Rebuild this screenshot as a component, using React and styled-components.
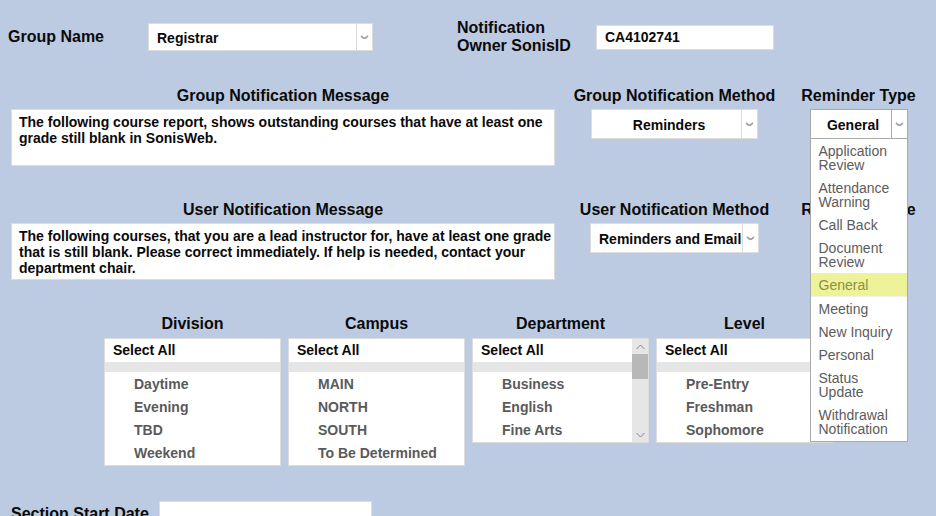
import React from "react";
import styled, { createGlobalStyle, css } from "styled-components";

const GlobalStyle = createGlobalStyle`
  *, *::before, *::after { box-sizing: border-box; }
  body {
    margin: 0;
    background: #bccae2;
    color: #0a0a0a;
    font-family: "Liberation Sans", Arial, sans-serif;
  }
`;

const Form = styled.form`
  height: 100vh;
  overflow: hidden;
  padding-top: 19px;
`;

const IdentityRow = styled.div`
  display: grid;
  grid-template-columns: 140px 225fr 84fr 139px 178fr 154fr;
  align-items: center;
  padding: 0 8px;
  margin-bottom: 32px;

  & > :nth-child(3) {
    grid-column: 4;
  }
`;

const MessageRow = styled.div`
  display: grid;
  grid-template-columns: 544fr 239fr 129fr;
  padding: 0 13px 0 11px;
  margin-bottom: 35px;
`;

const FilterRow = styled.div`
  display: grid;
  grid-template-columns: repeat(4, minmax(0, 1fr));
  align-items: start;
  gap: 7px;
  padding: 0 11% 0 104px;
  margin-bottom: 35px;
`;

const DateRow = styled.div`
  display: flex;
  align-items: center;
  padding-left: 11px;
`;

const Field = styled.div`
  display: flex;
  flex-direction: column;
  align-items: ${(p) => (p.$stretch ? "stretch" : "center")};
  gap: 4px;
  min-width: 0;
`;

const FilterSection = styled.section`
  display: flex;
  flex-direction: column;
  gap: 5px;
  min-width: 0;
`;

const Label = styled.label`
  font-size: 16px;
  font-weight: 700;
  line-height: 18px;
  text-align: ${(p) => (p.$center ? "center" : "left")};
  white-space: nowrap;
`;

const DateLabel = styled(Label)`
  width: 148px;
`;

const Heading = styled.h2`
  margin: 0;
  font-size: 16px;
  line-height: 18px;
  text-align: center;
`;

const boxed = css`
  border: 1px solid #dcdcdc;
  border-radius: 0;
  background: #fff;
  color: #0a0a0a;
  font: 700 14px/16px "Liberation Sans", Arial, sans-serif;
  outline: none;
`;

const TextInput = styled.input`
  ${boxed}
  width: ${(p) => p.$width || "100%"};
  height: 25px;
  padding: 0 8px;
`;

const Message = styled.textarea`
  ${boxed}
  display: block;
  width: 100%;
  height: 57px;
  padding: 4px 0 4px 7px;
  resize: none;
  overflow: hidden;
`;

const SelectFrame = styled.div`
  position: relative;
  display: grid;
  grid-template-columns: minmax(0, 1fr) 17px;
  width: ${(p) => p.$width || "100%"};
  height: ${(p) => p.$height || "30px"};
  --edge: ${(p) => (p.$open ? "#a9a9a9" : "#dcdcdc")};
`;

const NativeSelect = styled.select`
  ${boxed}
  grid-area: 1 / 1 / 2 / 3;
  appearance: none;
  width: 100%;
  height: 100%;
  padding: ${(p) => (p.$center ? "2px 17px 0 6px" : "2px 17px 0 8px")};
  border-color: var(--edge);
  text-align-last: ${(p) => (p.$center ? "center" : "left")};
`;

const Arrow = styled.span`
  grid-area: 1 / 2;
  z-index: 1;
  display: flex;
  align-items: center;
  justify-content: center;
  border: 1px solid var(--edge);
  pointer-events: none;
`;

const Menu = styled.ul`
  position: absolute;
  z-index: 5;
  top: 100%;
  left: 0;
  right: 0;
  margin: 0;
  padding: 0 0 1px;
  list-style: none;
  background: #fff;
  border: 1px solid #a9a9a9;
  border-top: 0;
`;

const MenuItem = styled.li`
  padding: 5px 8px 4px;
  font-size: 14px;
  line-height: 14px;
  color: ${(p) => (p.$selected ? "#8b9040" : "#5c5c5c")};
  background: ${(p) => (p.$selected ? "#eef39a" : "#fff")};
  border-bottom: ${(p) => (p.$selected ? "1px solid #f0f0e4" : "0")};
`;

const ListBox = styled.div`
  display: flex;
  background: #fff;
  border: 1px solid #dcdcdc;
  font-size: 14px;
  font-weight: 700;
`;

const Choices = styled.div`
  flex: 1;
  min-width: 0;
`;

const SelectAll = styled.button`
  display: block;
  width: 100%;
  height: 33px;
  padding: 0 8px;
  border: 0;
  border-bottom: 10px solid #e6e6e6;
  background: #fff;
  color: #0a0a0a;
  font: inherit;
  line-height: 23px;
  text-align: left;
`;

const ChoiceList = styled.ul`
  margin: 0;
  padding: 1px 0 0;
  list-style: none;
`;

const Choice = styled.button`
  display: block;
  width: 100%;
  height: 23px;
  padding: 0 8px 0 29px;
  border: 0;
  background: none;
  color: #5a5a5a;
  font: inherit;
  line-height: 23px;
  text-align: left;
  white-space: nowrap;
`;

const ScrollTrack = styled.div`
  display: flex;
  flex-direction: column;
  width: 16px;
  background: #e6e6e6;
`;

const ScrollButton = styled.button`
  display: flex;
  align-items: center;
  justify-content: center;
  height: 15px;
  padding: 0;
  border: 0;
  background: none;
`;

const ScrollThumb = styled.div`
  height: 25px;
  margin-bottom: auto;
  background: #b8b8b8;
`;

function DropArrow() {
  return (
    <Arrow aria-hidden="true">
      <svg width="9" height="5" viewBox="0 0 9 5" fill="none">
        <path d="M1 0.8 L3.2 2.8 Q4.5 3.6 5.8 2.8 L8 0.8" stroke="#a0a0a0" strokeWidth="1.7" />
      </svg>
    </Arrow>
  );
}

function ScrollChevron({ d }) {
  return (
    <svg width="9" height="6" viewBox="0 0 9 6" fill="none" aria-hidden="true">
      <path d={d} stroke="#858585" strokeWidth="1" />
    </svg>
  );
}

function Select({ id, value, width, height, center, open, children }) {
  return (
    <SelectFrame $width={width} $height={height} $open={open}>
      <NativeSelect id={id} $center={center}>
        {value && <option>{value}</option>}
      </NativeSelect>
      <DropArrow />
      {children}
    </SelectFrame>
  );
}

const reminderTypes = [
  "Application Review",
  "Attendance Warning",
  "Call Back",
  "Document Review",
  "General",
  "Meeting",
  "New Inquiry",
  "Personal",
  "Status Update",
  "Withdrawal Notification",
];

const filters = [
  { title: "Division", items: ["Daytime", "Evening", "TBD", "Weekend"] },
  { title: "Campus", items: ["MAIN", "NORTH", "SOUTH", "To Be Determined"] },
  { title: "Department", items: ["Business", "English", "Fine Arts"], scroll: true },
  { title: "Level", items: ["Pre-Entry", "Freshman", "Sophomore"] },
];

function FilterList({ title, items, scroll }) {
  return (
    <FilterSection aria-label={title}>
      <Heading>{title}</Heading>
      <ListBox>
        <Choices>
          <SelectAll type="button">Select All</SelectAll>
          <ChoiceList>
            {items.map((item) => (
              <li key={item}>
                <Choice type="button">{item}</Choice>
              </li>
            ))}
          </ChoiceList>
        </Choices>
        {scroll && (
          <ScrollTrack>
            <ScrollButton type="button" aria-label="Scroll up">
              <ScrollChevron d="M0.5 5 L4.5 1 L8.5 5" />
            </ScrollButton>
            <ScrollThumb />
            <ScrollButton type="button" aria-label="Scroll down">
              <ScrollChevron d="M0.5 1 L4.5 5 L8.5 1" />
            </ScrollButton>
          </ScrollTrack>
        )}
      </ListBox>
    </FilterSection>
  );
}

export default function App() {
  return (
    <>
      <GlobalStyle />
      <Form>
        <IdentityRow>
          <Label htmlFor="group-name">Group Name</Label>
          <Select id="group-name" value="Registrar" height="28px" />
          <Label htmlFor="owner-id">
            Notification
            <br />
            Owner SonisID
          </Label>
          <TextInput id="owner-id" defaultValue="CA4102741" />
        </IdentityRow>

        <MessageRow>
          <Field $stretch>
            <Label $center htmlFor="group-message">Group Notification Message</Label>
            <Message
              id="group-message"
              spellCheck={false}
              defaultValue="The following course report, shows outstanding courses that have at least one grade still blank in SonisWeb."
            />
          </Field>
          <Field>
            <Label htmlFor="group-method">Group Notification Method</Label>
            <Select id="group-method" value="Reminders" width="167px" center />
          </Field>
          <Field>
            <Label htmlFor="group-type">Reminder Type</Label>
            <Select id="group-type" value="General" width="98px" center open>
              <Menu role="listbox" aria-label="Reminder Type">
                {reminderTypes.map((type) => (
                  <MenuItem
                    key={type}
                    role="option"
                    aria-selected={type === "General"}
                    $selected={type === "General"}
                  >
                    {type}
                  </MenuItem>
                ))}
              </Menu>
            </Select>
          </Field>
        </MessageRow>

        <MessageRow>
          <Field $stretch>
            <Label $center htmlFor="user-message">User Notification Message</Label>
            <Message
              id="user-message"
              spellCheck={false}
              defaultValue="The following courses, that you are a lead instructor for, have at least one grade that is still blank. Please correct immediately. If help is needed, contact your department chair."
            />
          </Field>
          <Field>
            <Label htmlFor="user-method">User Notification Method</Label>
            <Select id="user-method" value="Reminders and Email" width="169px" />
          </Field>
          <Field>
            <Label htmlFor="user-type">Reminder Type</Label>
            <Select id="user-type" width="98px" center />
          </Field>
        </MessageRow>

        <FilterRow>
          {filters.map((filter) => (
            <FilterList key={filter.title} {...filter} />
          ))}
        </FilterRow>

        <DateRow>
          <DateLabel htmlFor="start-date">Section Start Date</DateLabel>
          <TextInput id="start-date" $width="213px" />
        </DateRow>
      </Form>
    </>
  );
}
